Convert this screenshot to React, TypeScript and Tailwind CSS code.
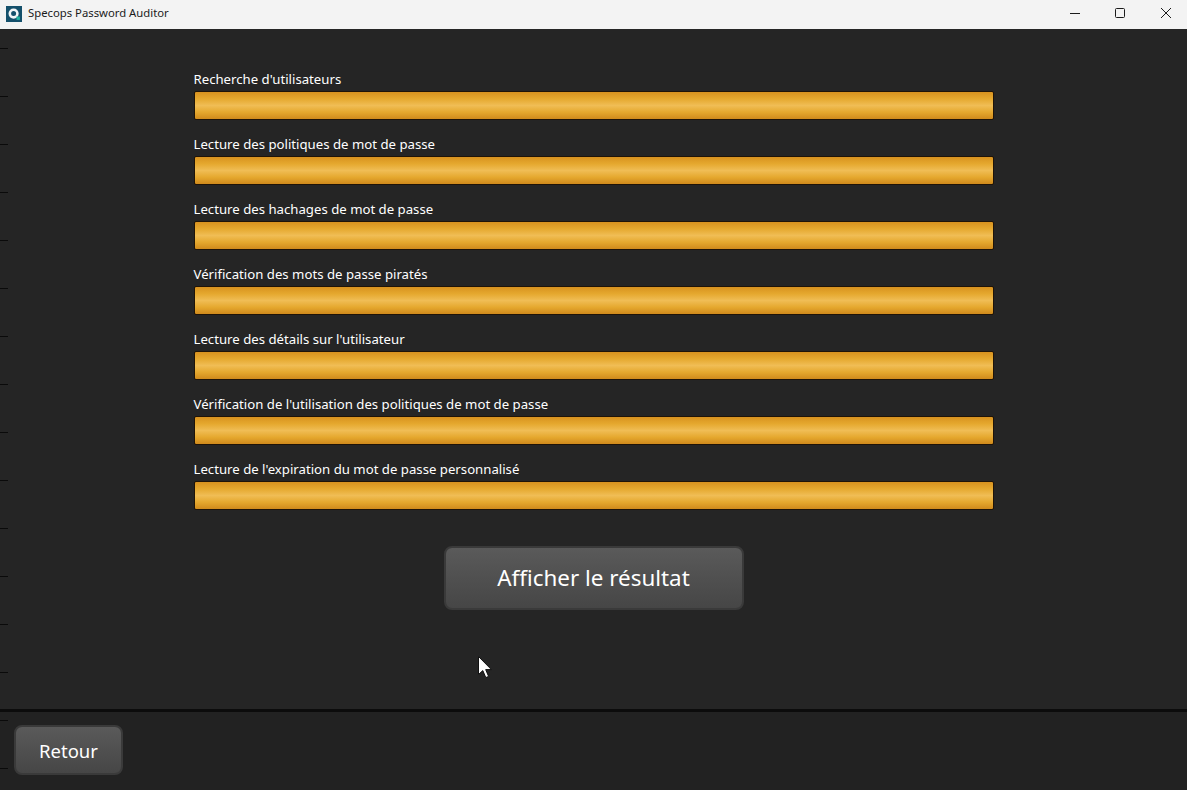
const rows = [
  "Recherche d'utilisateurs",
  "Lecture des politiques de mot de passe",
  "Lecture des hachages de mot de passe",
  "Vérification des mots de passe piratés",
  "Lecture des détails sur l'utilisateur",
  "Vérification de l'utilisation des politiques de mot de passe",
  "Lecture de l'expiration du mot de passe personnalisé",
];

export default function App() {
  return (
    <div className="relative flex h-[790px] w-[1187px] flex-col overflow-hidden bg-[#252525] font-['Noto_Sans','Open_Sans',sans-serif] text-white">
      <header className="flex h-[29px] items-center justify-between bg-[#f3f3f3] text-[#1b1b1b]">
        <div className="flex items-center pb-[2px]">
          <svg className="ml-[6px] h-4 w-4" viewBox="0 0 16 16">
            <rect width="16" height="16" fill="#14506b" />
            <circle cx="7.6" cy="7.6" r="3.8" fill="none" stroke="#f2f5f6" strokeWidth="2.6" />
            <rect x="10.5" y="10.5" width="3.4" height="3.4" fill="#21b3a2" />
          </svg>
          <span className="ml-[6px] text-[11.3px]">Specops Password Auditor</span>
        </div>
        <div className="flex items-center">
          <svg className="h-[29px] w-[46px]" viewBox="0 0 46 29">
            <path d="M21 13.5H31" stroke="#1b1b1b" strokeWidth="1" fill="none" />
          </svg>
          <svg className="h-[29px] w-[46px]" viewBox="0 0 46 29">
            <rect x="20.5" y="8.5" width="9" height="9" rx="1" stroke="#1b1b1b" strokeWidth="1" fill="none" />
          </svg>
          <svg className="h-[29px] w-[46px]" viewBox="0 0 46 29">
            <path d="M20 8L30 18M30 8L20 18" stroke="#1b1b1b" strokeWidth="1" fill="none" />
          </svg>
        </div>
      </header>

      <main className="flex h-[680px] flex-col items-center bg-[#252525] pt-[41px]">
        <div className="flex w-[800px] flex-col gap-[15px]">
          {rows.map((label) => (
            <div key={label} className="flex flex-col">
              <span className="h-[21px] text-[13.2px] leading-[18px] text-white">{label}</span>
              <div className="h-[29px] rounded-[2px] border border-[#1f1408] bg-[linear-gradient(180deg,#d8921f_0%,#e5a82e_25%,#f0bd55_50%,#e5a82e_75%,#d08a1c_100%)]" />
            </div>
          ))}
        </div>
        <button className="mt-[36px] h-[64px] w-[300px] rounded-lg border-2 border-[#3a3a3a] bg-[linear-gradient(180deg,#5a5a5a,#464646)] text-[22.4px] text-white">
          Afficher le résultat
        </button>
      </main>

      <div className="h-[3px] bg-[#0c0c0c]" />
      <footer className="flex flex-1 items-start bg-[#222222] pl-[14px] pt-[13px]">
        <button className="h-[50px] w-[109px] rounded-lg border-2 border-[#3a3a3a] bg-[linear-gradient(180deg,#5a5a5a,#464646)] pt-[2px] text-[18.5px] text-white">
          Retour
        </button>
      </footer>

      <div className="pointer-events-none absolute left-0 top-0 h-full w-2 bg-[repeating-linear-gradient(180deg,#0a0a0a_0px,#0a0a0a_1px,transparent_1px,transparent_48px)] [clip-path:inset(29px_0_0_0)]" />

      <svg className="absolute left-[477px] top-[655px] h-[26px] w-[16px]" viewBox="0 0 16 26">
        <path d="M1.5 1.5V19.5L5.8 15.6L8.8 22.6L11.6 21.4L8.7 14.6H14.4Z" fill="#ffffff" stroke="#111111" strokeWidth="1" />
      </svg>
    </div>
  );
}
